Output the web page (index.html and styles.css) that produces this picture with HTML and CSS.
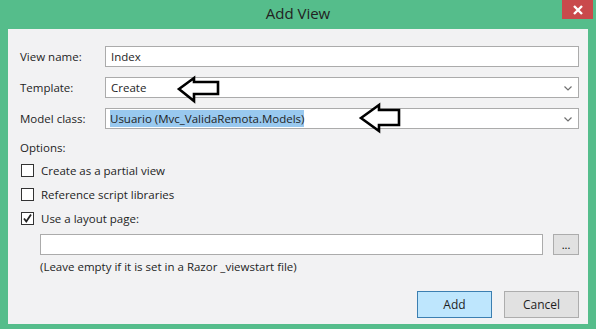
FILE: index.html
```html
<!DOCTYPE html>
<html lang="en">
  <head>
    <meta charset="UTF-8" />
    <title>Add View</title>
    <link rel="stylesheet" href="styles.css">
  </head>
  <body>
  <div class="window">
    <div class="titlebar">
      <span class="title">Add View</span>
      <div class="close">
        <svg width="10" height="10" viewBox="0 0 10 10"><path d="M1 1L9 9M9 1L1 9" stroke="#fff" stroke-width="2.4"/></svg>
      </div>
    </div>
    <div class="content">
      <div class="row">
        <label class="lbl">View name:</label>
        <div class="field">Index</div>
      </div>
      <div class="row">
        <label class="lbl">Template:</label>
        <div class="field select">Create
          <svg class="chev" width="8" height="5" viewBox="0 0 8 5"><path d="M0.5 0.5L4 4L7.5 0.5" fill="none" stroke="#707070" stroke-width="1.2"/></svg>
        </div>
      </div>
      <div class="row">
        <label class="lbl">Model class:</label>
        <div class="field select"><span class="sel">Usuario (Mvc_ValidaRemota.Models)</span>
          <svg class="chev" width="8" height="5" viewBox="0 0 8 5"><path d="M0.5 0.5L4 4L7.5 0.5" fill="none" stroke="#707070" stroke-width="1.2"/></svg>
        </div>
      </div>
      <div class="options">Options:</div>
      <div class="check"><span class="box"></span>Create as a partial view</div>
      <div class="check"><span class="box"></span>Reference script libraries</div>
      <div class="check"><span class="box">
        <svg width="11" height="11" viewBox="0 0 11 11"><path d="M2 5.5L4.3 8.5L9 1.5" fill="none" stroke="#222" stroke-width="1.8"/></svg>
      </span>Use a layout page:</div>
      <div class="layout-row">
        <div class="field wide"></div>
        <button class="browse">...</button>
      </div>
      <div class="note">(Leave empty if it is set in a Razor _viewstart file)</div>
      <div class="buttons">
        <button class="btn primary">Add</button>
        <button class="btn">Cancel</button>
      </div>
    </div>

    <!-- arrows drawn on top of the screenshot -->
    <svg class="arrow arrow1" width="45" height="29" viewBox="0 0 45 29"><path d="M3 14L18 3V7H42V19H18V26Z" fill="#fff" stroke="#000" stroke-width="2.6" stroke-linejoin="miter"/></svg>
    <svg class="arrow arrow2" width="44" height="32" viewBox="0 0 44 32"><path d="M3 16L21 3V8H41V23H21V29Z" fill="#fff" stroke="#000" stroke-width="2.6" stroke-linejoin="miter"/></svg>
  </div>
  </body>
</html>
```

FILE: styles.css
```css
body {
  margin: 0;
  font-family: "Open Sans", "Noto Sans", sans-serif;
  font-size: 11.5px;
  color: #1e1e1e;
}
.window {
  position: relative;
  width: 596px;
  height: 329px;
  background-color: #55bd8b;
  padding: 0 8px 5px 8px;
  box-sizing: border-box;
  display: flex;
  flex-direction: column;
}
.titlebar {
  height: 29px;
  display: flex;
  justify-content: center;
  align-items: center;
}
.title {
  font-size: 15px;
  color: #222;
  margin-top: -3px;
}
.close {
  position: absolute;
  top: 0;
  right: 3px;
  width: 31px;
  height: 19px;
  background-color: #c94a4c;
  display: flex;
  justify-content: center;
  align-items: center;
}
.content {
  flex: 1;
  background-color: #f2f2f3;
  padding: 17px 9px 0 12px;
  display: flex;
  flex-direction: column;
}
.row {
  display: flex;
  align-items: center;
  height: 21px;
  margin-bottom: 10px;
}
.lbl {
  width: 85px;
}
.field {
  flex: 1;
  height: 21px;
  box-sizing: border-box;
  background-color: #fff;
  border: 1px solid #ababab;
  padding: 0 5px;
  display: flex;
  align-items: center;
  position: relative;
}
.select .chev {
  position: absolute;
  right: 6px;
  top: 8px;
}
.sel {
  background-color: #99c9ef;
  padding: 1px 0;
  margin-left: -1px;
}
.options {
  height: 18px;
  line-height: 18px;
}
.check {
  display: flex;
  align-items: center;
  height: 14px;
  margin-top: 6px;
}
.check + .check {
  margin-top: 10px;
}
.box {
  width: 13px;
  height: 13px;
  box-sizing: border-box;
  border: 1px solid #333;
  background-color: #fff;
  margin: 0 7px 0 1px;
  display: flex;
  align-items: center;
  justify-content: center;
}
.layout-row {
  display: flex;
  margin-top: 9px;
  padding-left: 20px;
  height: 21px;
}
.wide {
  flex: none;
  width: 503px;
}
.browse {
  margin-left: 10px;
  width: 26px;
  height: 21px;
  border: 1px solid #acacac;
  background-color: #e1e1e1;
  font-family: inherit;
  font-size: 11px;
  padding: 0;
  line-height: 14px;
}
.note {
  padding-left: 20px;
  margin-top: 4px;
}
.buttons {
  display: flex;
  justify-content: flex-end;
  gap: 12px;
  margin-top: 17px;
}
.btn {
  width: 75px;
  height: 27px;
  border: 1px solid #adadad;
  background-color: #e1e1e1;
  font-family: inherit;
  font-size: 12px;
  color: #1e1e1e;
}
.primary {
  border-color: #3c7fb1;
  background-color: #bee6fd;
}
.arrow {
  position: absolute;
}
.arrow1 {
  left: 176px;
  top: 75px;
}
.arrow2 {
  left: 358px;
  top: 102px;
}
```
